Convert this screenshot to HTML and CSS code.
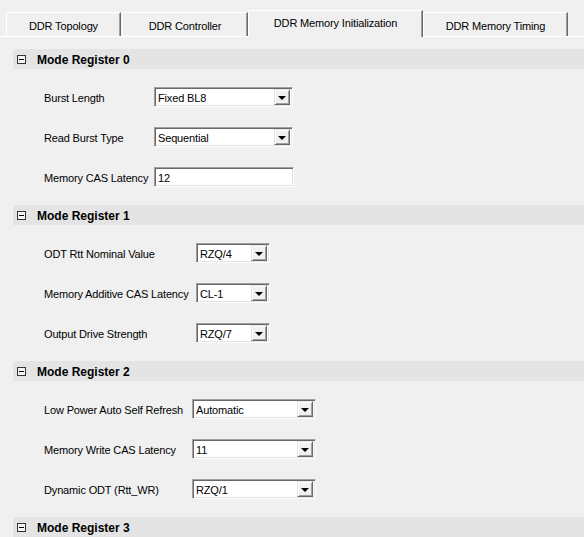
FILE: index.html
```html
<!DOCTYPE html>
<html>
<head>
<meta charset="utf-8">
<link rel="stylesheet" href="styles.css">
</head>
<body>
<div class="tabs">
  <div class="tab t1">DDR Topology</div>
  <div class="tab t2">DDR Controller</div>
  <div class="tab t3 active">DDR Memory Initialization</div>
  <div class="tab t4">DDR Memory Timing</div>
</div>
<div class="panel">
  <section class="group">
    <div class="group-head"><span class="toggle"></span>Mode Register 0</div>
    <div class="fields f0">
      <span class="lbl">Burst Length</span>
      <div class="combo"><span class="val">Fixed BL8</span><span class="btn"></span></div>
      <span class="lbl">Read Burst Type</span>
      <div class="combo"><span class="val">Sequential</span><span class="btn"></span></div>
      <span class="lbl">Memory CAS Latency</span>
      <div class="edit"><span class="val">12</span></div>
    </div>
  </section>
  <section class="group">
    <div class="group-head"><span class="toggle"></span>Mode Register 1</div>
    <div class="fields f1">
      <span class="lbl">ODT Rtt Nominal Value</span>
      <div class="combo"><span class="val">RZQ/4</span><span class="btn"></span></div>
      <span class="lbl">Memory Additive CAS Latency</span>
      <div class="combo"><span class="val">CL-1</span><span class="btn"></span></div>
      <span class="lbl">Output Drive Strength</span>
      <div class="combo"><span class="val">RZQ/7</span><span class="btn"></span></div>
    </div>
  </section>
  <section class="group">
    <div class="group-head"><span class="toggle"></span>Mode Register 2</div>
    <div class="fields f2">
      <span class="lbl">Low Power Auto Self Refresh</span>
      <div class="combo"><span class="val">Automatic</span><span class="btn"></span></div>
      <span class="lbl">Memory Write CAS Latency</span>
      <div class="combo"><span class="val">11</span><span class="btn"></span></div>
      <span class="lbl">Dynamic ODT (Rtt_WR)</span>
      <div class="combo"><span class="val">RZQ/1</span><span class="btn"></span></div>
    </div>
  </section>
  <section class="group">
    <div class="group-head"><span class="toggle"></span>Mode Register 3</div>
  </section>
</div>
</body>
</html>
```
FILE: styles.css
```css
html, body {
  margin: 0;
  padding: 0;
  background: #f0f0f0;
  overflow: hidden;
  height: 537px;
}
body {
  font-family: "Liberation Sans", Arial, sans-serif;
  font-size: 11px;
  letter-spacing: -0.15px;
  color: #000;
}
.tabs {
  display: flex;
  align-items: flex-end;
  margin-top: 10px;
  padding-left: 6px;
  height: 26px;
  border-bottom: 1px solid #fff;
}
.tab {
  box-sizing: border-box;
  height: 24px;
  display: flex;
  align-items: center;
  justify-content: center;
  border-top: 1px solid #fff;
  border-left: 1px solid #fff;
  border-right: 1px solid #696969;
  box-shadow: inset -1px 0 0 #a0a0a0;
  padding-top: 3px;
  background: #f0f0f0;
}
.t1 { width: 115px; }
.t2 { width: 126px; margin-left: 1px; }
.t3 { width: 175px; }
.t4 { width: 145px; }
.tab.active {
  height: 27px;
  margin-bottom: -1px;
  padding-top: 2px;
  padding-bottom: 4px;
}
.panel {
  padding: 12px 0 0 13px;
}
.group-head {
  height: 20px;
  background: #e4e4e4;
  display: flex;
  align-items: center;
  font-weight: bold;
  font-size: 12px;
  letter-spacing: 0;
  padding-top: 1px;
  box-sizing: border-box;
}
.toggle {
  box-sizing: border-box;
  width: 9px;
  height: 9px;
  border: 1px solid #333;
  margin: -1px 11px 0 4px;
  position: relative;
  background: #f4f4f4;
}
.toggle::after {
  content: "";
  position: absolute;
  left: 1px;
  right: 1px;
  top: 3px;
  height: 1px;
  background: #000;
}
.fields {
  display: grid;
  grid-auto-rows: 20px;
  row-gap: 20px;
  padding: 18px 0 18px 31px;
  align-items: center;
}
.f0 { grid-template-columns: 110px 140px; }
.f1 { grid-template-columns: 152px 74px; }
.f2 { grid-template-columns: 148px 124px; }
.lbl {
  box-sizing: border-box;
  white-space: nowrap;
  height: 20px;
  line-height: 18px;
  padding-top: 2px;
}
.combo, .edit {
  box-sizing: border-box;
  height: 20px;
  background: #fff;
  border-top: 1px solid #a0a0a0;
  border-left: 1px solid #a0a0a0;
  border-right: 1px solid #fff;
  border-bottom: 1px solid #fff;
  box-shadow: inset 1px 1px 0 #696969, inset -1px -1px 0 #e3e3e3;
  display: flex;
  align-items: center;
  padding: 0 2px 0 2px;
}
.combo { width: 139px; }
.f1 .combo { width: 74px; }
.f2 .combo { width: 124px; }
.edit { width: 140px; }
.val {
  flex: 1;
  padding-left: 1px;
  padding-top: 1px;
  line-height: 14px;
}
.btn {
  box-sizing: border-box;
  width: 16px;
  height: 16px;
  background: #f0f0f0;
  border-top: 1px solid #e3e3e3;
  border-left: 1px solid #e3e3e3;
  border-right: 1px solid #696969;
  border-bottom: 1px solid #696969;
  box-shadow: inset 1px 1px 0 #fff, inset -1px -1px 0 #a0a0a0;
  display: flex;
  align-items: center;
  justify-content: center;
}
.btn::after {
  content: "";
  width: 0;
  height: 0;
  border-left: 4px solid transparent;
  border-right: 4px solid transparent;
  border-top: 4px solid #000;
  margin-top: 1px;
}
```
